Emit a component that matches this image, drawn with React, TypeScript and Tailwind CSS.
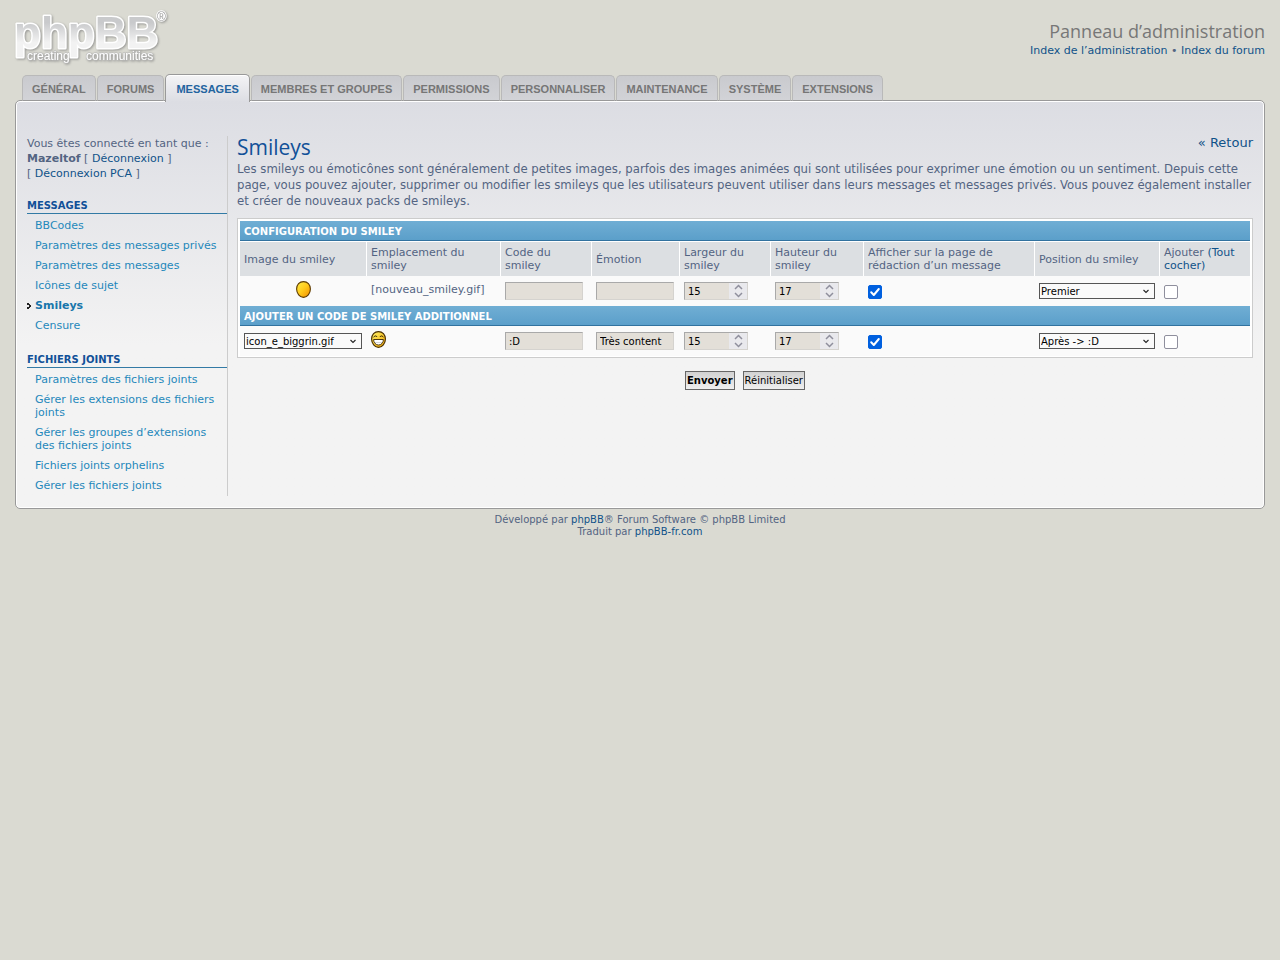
import { useState } from 'react';
import type { ReactNode } from 'react';

interface MenuGroup {
  title: string;
  items: string[];
}

const TABS = [
  'Général',
  'Forums',
  'Messages',
  'Membres et groupes',
  'Permissions',
  'Personnaliser',
  'Maintenance',
  'Système',
  'Extensions',
];

const MENU: MenuGroup[] = [
  {
    title: 'Messages',
    items: ['BBCodes', 'Paramètres des messages privés', 'Paramètres des messages', 'Icônes de sujet', 'Smileys', 'Censure'],
  },
  {
    title: 'Fichiers joints',
    items: [
      'Paramètres des fichiers joints',
      'Gérer les extensions des fichiers joints',
      'Gérer les groupes d’extensions des fichiers joints',
      'Fichiers joints orphelins',
      'Gérer les fichiers joints',
    ],
  },
];

const ACTIVE_TAB = 'Messages';
const ACTIVE_ITEM = 'Smileys';

const FIELD = 'block h-[18px] border border-t-[#a9a9a9] border-l-[#a9a9a9] border-r-[#d5d3cf] border-b-[#d5d3cf] bg-[#e3dfd8] px-[3px] text-[10px] text-black';
const BUTTON = 'h-[19px] border border-[#666] bg-[#efefef] bg-linear-to-b from-[#d2d2d2] to-[#efefef] px-px text-[10px] text-black';

export default function App() {
  const [allChecked, setAllChecked] = useState(false);

  return (
    <div className="min-h-screen bg-[#dadad2] px-[15px] font-['DejaVu_Sans','Liberation_Sans',sans-serif] text-[11px] leading-[13px] text-[#536482]">
      <header className="flex h-[74px] items-start justify-between">
        <Logo />
        <div className="pt-5 text-right">
          <h1 className="font-['Open_Sans',sans-serif] text-[18px] leading-[23px] text-[#777]">Panneau d’administration</h1>
          <p className="leading-[15px]">
            <Link>Index de l’administration</Link> • <Link>Index du forum</Link>
          </p>
        </div>
      </header>

      <nav className="relative z-10 -mb-px flex h-[27px] items-end gap-px pl-[7px]">
        {TABS.map((tab) => (
          <Tab key={tab} label={tab} active={tab === ACTIVE_TAB} />
        ))}
      </nav>

      <div className="flex rounded-[5px] border border-[#999] bg-[#f3f3f3] bg-linear-to-b from-[#dcdde3] to-[#f3f3f3] to-60% px-[11px] pt-[35px] pb-3 inset-ring inset-ring-white">
        <Sidebar />
        <main className="min-w-0 flex-1 pl-[9px]">
          <div className="flex items-start justify-between">
            <h2 className="pb-[3px] font-['Open_Sans',sans-serif] text-[21px] leading-[22px] text-[#115098]">Smileys</h2>
            <a href="#" className="text-[13px] leading-[14px] text-[#105289]">« Retour</a>
          </div>
          <p className="font-['DejaVu_Sans_Condensed','Noto_Sans',sans-serif] text-[13px] leading-[16px]">
            Les smileys ou émoticônes sont généralement de petites images, parfois des images animées qui sont utilisées pour exprimer une émotion ou un sentiment. Depuis cette page, vous pouvez ajouter, supprimer ou modifier les smileys que les utilisateurs peuvent utiliser dans leurs messages et messages privés. Vous pouvez également installer et créer de nouveaux packs de smileys.
          </p>

          <form onSubmit={(e) => e.preventDefault()}>
            <div className="mt-[9px] border border-[#ccc] bg-white p-0.5 pb-px">
              <table className="w-full table-fixed border-separate border-spacing-0 text-left">
                <colgroup>
                  <col className="w-[126px]" />
                  <col className="w-[134px]" />
                  <col className="w-[91px]" />
                  <col className="w-[88px]" />
                  <col className="w-[91px]" />
                  <col className="w-[93px]" />
                  <col className="w-[171px]" />
                  <col className="w-[125px]" />
                  <col className="w-[91px]" />
                </colgroup>
                <thead>
                  <TitleRow>Configuration du smiley</TitleRow>
                  <tr className="h-[35px]">
                    <Th>Image du smiley</Th>
                    <Th>Emplacement du smiley</Th>
                    <Th>Code du smiley</Th>
                    <Th>Émotion</Th>
                    <Th>Largeur du smiley</Th>
                    <Th>Hauteur du smiley</Th>
                    <Th>Afficher sur la page de rédaction d’un message</Th>
                    <Th>Position du smiley</Th>
                    <Th>
                      Ajouter{' '}
                      <a href="#" className="text-[#105289]" onClick={() => setAllChecked(!allChecked)}>
                        (Tout cocher)
                      </a>
                    </Th>
                  </tr>
                </thead>
                <tbody>
                  <SmileyRow
                    image={<BlankSmiley />}
                    location="[nouveau_smiley.gif]"
                    code=""
                    emotion=""
                    position="Premier"
                    add={allChecked}
                  />
                  <TitleRow>Ajouter un code de smiley additionnel</TitleRow>
                  <SmileyRow
                    image={<Select label="Image du smiley" value="icon_e_biggrin.gif" />}
                    location={<GrinSmiley />}
                    code=":D"
                    emotion="Très content"
                    position="Après -> :D"
                    add={allChecked}
                  />
                </tbody>
              </table>
            </div>

            <div className="mt-[13px] flex justify-center gap-2">
              <button type="submit" className={`${BUTTON} font-bold`}>
                Envoyer
              </button>
              <button type="reset" className={BUTTON}>
                Réinitialiser
              </button>
            </div>
          </form>
        </main>
      </div>

      <footer className="pt-[5px] text-center text-[10px] leading-[12px]">
        Développé par <Link>phpBB</Link>® Forum Software © phpBB Limited
        <br />
        Traduit par <Link>phpBB-fr.com</Link>
      </footer>
    </div>
  );
}

function Link({ children }: { children: ReactNode }) {
  return <a href="#" className="text-[#105289] hover:underline">{children}</a>;
}

function Tab({ label, active }: { label: string; active: boolean }) {
  return (
    <a
      href="#"
      className={`rounded-t-[5px] border font-['Liberation_Sans',sans-serif] text-[11px] font-bold whitespace-nowrap uppercase ${
        active
          ? '-mb-px h-[28px] border-[#999] border-b-0 bg-[#dcdde3] bg-linear-to-b from-[#f4f4f6] to-[#dcdde3] px-[10px] leading-[29px] text-[#23649f] inset-shadow-[0_1px_0_white]'
          : 'h-[26px] border-[#b9b9b9] border-b-[#999] bg-[#cccdd1] bg-linear-to-b from-[#c9cace] to-[#d2d3d7] px-[9px] leading-[27px] text-[#767676]'
      }`}
    >
      {label}
    </a>
  );
}

function Sidebar() {
  return (
    <aside className="w-[201px] shrink-0 border-r border-[#ccc]">
      <p className="pb-px leading-[15px]">
        Vous êtes connecté en tant que :
        <br />
        <strong>Mazeltof</strong> [ <Link>Déconnexion</Link> ]
        <br />[ <Link>Déconnexion PCA</Link> ]
      </p>
      {MENU.map((group) => (
        <section key={group.title} className="pt-[17px]">
          <h3 className="border-b border-[#327aa5] pt-px pb-px text-[10px] leading-[12px] font-bold text-[#115098] uppercase">{group.title}</h3>
          <ul className="pt-0.5">
            {group.items.map((item) => (
              <li key={item} className="relative">
                {item === ACTIVE_ITEM && (
                  <svg className="absolute top-[7px] left-0" width="4" height="6" viewBox="0 0 4 6" shapeRendering="crispEdges">
                    <path d="M0 0h2v1h1v1h1v2h-1v1h-1v1h-2v-2h1v-2h-1z" fill="#222" />
                    <path d="M0 2h2v2h-2z" fill="#ececef" />
                  </svg>
                )}
                <a
                  href="#"
                  className={`mb-px block py-[3px] pr-2 pl-2 ${item === ACTIVE_ITEM ? 'font-bold text-[#1876ab]' : 'text-[#1f88bb]'}`}
                >
                  {item}
                </a>
              </li>
            ))}
          </ul>
        </section>
      ))}
    </aside>
  );
}

function TitleRow({ children }: { children: string }) {
  return (
    <tr className="h-5">
      <th
        colSpan={9}
        className="border-b border-[#31729f] bg-[#60a3cd] bg-linear-to-b from-[#70aed4] to-[#5b9fca] px-1 pt-0.5 pb-0 text-[10px] leading-[12px] font-bold text-white uppercase"
      >
        {children}
      </th>
    </tr>
  );
}

function Th({ children }: { children: ReactNode }) {
  return <th className="border-t border-l border-white bg-[#dcdfe2] px-1 py-0 font-normal first:border-l-0">{children}</th>;
}

function Td({ children }: { children: ReactNode }) {
  return <td className="border-l border-[#fafafa] px-1 py-0 first:border-l-0">{children}</td>;
}

interface SmileyRowProps {
  image: ReactNode;
  location: ReactNode;
  code: string;
  emotion: string;
  position: string;
  add: boolean;
}

function SmileyRow({ image, location, code, emotion, position, add }: SmileyRowProps) {
  return (
    <tr className="h-[30px] bg-[#fafafa]">
      <Td>{image}</Td>
      <Td>
        <div className="pb-1">{location}</div>
      </Td>
      <Td>
        <input aria-label="Code du smiley" defaultValue={code} className={`${FIELD} w-[78px]`} />
      </Td>
      <Td>
        <input aria-label="Émotion" defaultValue={emotion} className={`${FIELD} w-[78px]`} />
      </Td>
      <Td>
        <NumberField label="Largeur du smiley" value={15} />
      </Td>
      <Td>
        <NumberField label="Hauteur du smiley" value={17} />
      </Td>
      <Td>
        <Checkbox label="Afficher sur la page de rédaction d’un message" checked />
      </Td>
      <Td>
        <Select label="Position du smiley" value={position} />
      </Td>
      <Td>
        <Checkbox key={String(add)} label="Ajouter" checked={add} />
      </Td>
    </tr>
  );
}

function NumberField({ label, value }: { label: string; value: number }) {
  return (
    <div className="relative w-16">
      <input type="number" aria-label={label} defaultValue={value} className={`${FIELD} w-full [appearance:textfield]`} />
      <span className="pointer-events-none absolute top-px right-px flex h-4 w-[18px] items-center justify-center bg-[#e9e9ed]">
        <svg width="9" height="14" viewBox="0 0 9 14" fill="none" stroke="#8f8f9d" strokeWidth="1.5">
          <path d="M1 5l3.500-3.500L8 5M1 9l3.500 3.500L8 9" />
        </svg>
      </span>
    </div>
  );
}

function Select({ label, value }: { label: string; value: string }) {
  return (
    <div className="relative">
      <select aria-label={label} className="block h-4 w-full appearance-none border border-[#555] bg-[#fafafa] px-px text-[10px] leading-[13px] text-black">
        <option>{value}</option>
      </select>
      <svg className="pointer-events-none absolute top-1.5 right-1.5" width="6" height="5" viewBox="0 0 6 5" fill="none" stroke="#222" strokeWidth="1.1">
        <path d="M.5 1L3 3.500 5.500 1" />
      </svg>
    </div>
  );
}

function Checkbox({ label, checked }: { label: string; checked: boolean }) {
  return (
    <div className="relative mt-0.5 size-[14px]">
      <input
        type="checkbox"
        aria-label={label}
        defaultChecked={checked}
        className="peer block size-[14px] appearance-none rounded-[2px] border border-[#8f8f9d] bg-white checked:border-[#0060df] checked:bg-[#0060df]"
      />
      <svg className="pointer-events-none absolute inset-0 hidden peer-checked:block" width="14" height="14" viewBox="0 0 14 14" fill="none" stroke="white" strokeWidth="2" strokeLinecap="round" strokeLinejoin="round">
        <path d="M3.200 7.300l2.600 2.700 5-6" />
      </svg>
    </div>
  );
}

function BlankSmiley() {
  return (
    <svg className="mx-auto -mt-1 block" width="15" height="17" viewBox="0 0 15 17">
      <defs>
        <linearGradient id="blank" x1="0" y1="0" x2="1" y2="1">
          <stop offset="0" stopColor="#fff04a" />
          <stop offset=".5" stopColor="#ffc91a" />
          <stop offset="1" stopColor="#f08a00" />
        </linearGradient>
      </defs>
      <path d="M7.500.6C3.500.6.6 3.700.6 8c0 4.600 3.200 8.400 6.900 8.400s6.900-3.800 6.900-8.400c0-4.300-2.900-7.400-6.900-7.400z" fill="url(#blank)" stroke="#5e3c05" strokeWidth="1.1" />
    </svg>
  );
}

function GrinSmiley() {
  return (
    <svg className="block" width="15" height="17" viewBox="0 0 15 17">
      <defs>
        <linearGradient id="grin" x1="0" y1="0" x2="1" y2="1">
          <stop offset="0" stopColor="#fff36a" />
          <stop offset="1" stopColor="#f5a800" />
        </linearGradient>
      </defs>
      <path d="M7.500.6C3.500.6.6 3.700.6 8c0 4.600 3.200 8.400 6.900 8.400s6.900-3.800 6.900-8.400c0-4.300-2.900-7.400-6.900-7.400z" fill="url(#grin)" stroke="#4a3005" strokeWidth="1.200" />
      <path d="M2.700 6.300C3.400 4.500 5.400 4.500 6.100 6M8.900 6C9.600 4.500 11.600 4.500 12.300 6.300" fill="none" stroke="#2a1c02" strokeWidth="1" />
      <path d="M2.600 8.500h9.800c0 3-2 5.500-4.900 5.500s-4.900-2.500-4.900-5.500z" fill="white" stroke="#3a2503" strokeWidth=".9" />
      <path d="M3.600 11.500h7.800" stroke="#aaa" strokeWidth=".5" />
    </svg>
  );
}

function Logo() {
  return (
    <svg width="155" height="66" viewBox="0 0 155 66" className="font-['Liberation_Sans',sans-serif] [filter:drop-shadow(1px_1px_1px_#777a)]" role="img" aria-label="phpBB creating communities">
      <defs>
        <linearGradient id="logo" x1="0" y1="0" x2="0" y2="1">
          <stop offset=".3" stopColor="#c9cacc" />
          <stop offset=".7" stopColor="#f2f2f2" />
        </linearGradient>
      </defs>
      <text x="-1" y="48" fontSize="44" fontWeight="bold" fill="url(#logo)" stroke="white" strokeWidth="3" strokeLinejoin="round" paintOrder="stroke">
        phpBB
      </text>
      <g fontSize="12" fill="white" stroke="#bbb" strokeWidth="1" paintOrder="stroke">
        <text x="12" y="60">creating</text>
        <text x="71" y="60">communities</text>
      </g>
      <text x="142" y="21" fontSize="12" fill="#999" stroke="white" strokeWidth="2" paintOrder="stroke">®</text>
    </svg>
  );
}
